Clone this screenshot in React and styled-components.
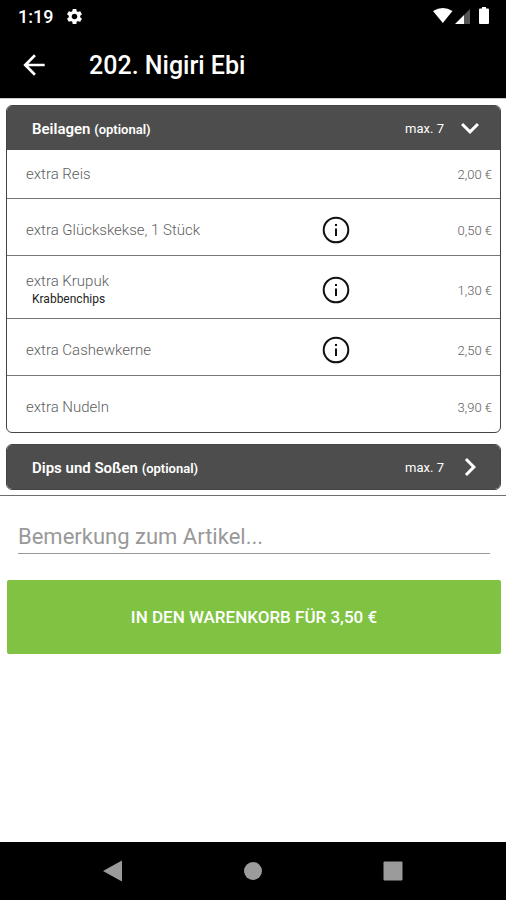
import React, { useState } from "react";
import styled, { createGlobalStyle } from "styled-components";

const GlobalStyle = createGlobalStyle`
  * { box-sizing: border-box; }
  body {
    margin: 0;
    background: #fff;
    font-family: Roboto, "Liberation Sans", sans-serif;
  }
  button, input { font-family: inherit; }
`;

const Screen = styled.div`
  min-height: 100vh;
  display: flex;
  flex-direction: column;
  background: #fff;
`;

const StatusBar = styled.div`
  display: flex;
  align-items: center;
  gap: 12px;
  height: 32px;
  padding: 0 16px 0 18px;
  background: #000;
  color: #fff;
  font-size: 18px;
  font-weight: 500;
`;

const StatusIcons = styled.div`
  display: flex;
  align-items: center;
  margin-left: auto;
`;

const AppBar = styled.header`
  display: flex;
  align-items: center;
  gap: 39px;
  height: 66px;
  padding: 0 18px;
  background: #000;
  color: #fff;
`;

const IconButton = styled.button`
  display: flex;
  padding: 0;
  border: 0;
  background: none;
  color: inherit;
  cursor: pointer;
`;

const Title = styled.h1`
  margin: 0;
  padding-top: 2px;
  font-size: 25px;
  line-height: 32px;
  font-weight: 500;
`;

const Groups = styled.main`
  display: flex;
  flex-direction: column;
  gap: 11px;
  padding: 6px 5px 5px 6px;
  border-top: 1px solid #ccc;
  border-bottom: 1px solid #6e6e6e;
`;

const Group = styled.section`
  border: 1px solid #444;
  border-radius: 6px;
  overflow: hidden;
`;

const GroupHeader = styled.button`
  display: flex;
  align-items: center;
  width: 100%;
  height: 44px;
  padding: 0 12px 0 25px;
  border: 0;
  background: #4d4d4d;
  color: #fff;
  font-size: 15px;
  font-weight: 700;
  text-align: left;
  cursor: pointer;
`;

const GroupName = styled.span`
  padding-top: 2px;
  font-weight: 600;
`;

const Optional = styled.span`
  font-size: 13px;
`;

const Limit = styled.span`
  margin-left: auto;
  padding-right: 8px;
  font-size: 13px;
  font-weight: 400;
`;

const ItemList = styled.ul`
  margin: 0;
  padding: 0;
  list-style: none;
`;

const heights = { short: 48, normal: 57, tall: 63 };

const Item = styled.li`
  display: grid;
  grid-template-columns: minmax(0, 1fr) 32px 140px;
  align-items: center;
  height: ${(p) => heights[p.$size]}px;
  padding: 0 8px 0 19px;
  color: #606060;

  & + & {
    padding-top: 6px;
    border-top: 1px solid #777;
  }
`;

const ItemName = styled.div`
  font-size: 15px;
  line-height: 18px;
  font-weight: 300;
`;

const ItemNote = styled.div`
  padding-left: 6px;
  color: #222;
  font-size: 12px;
  font-weight: 400;
`;

const InfoButton = styled(IconButton)`
  grid-column: 2;
  color: #111;
`;

const Price = styled.span`
  grid-column: 3;
  justify-self: end;
  font-size: 13px;
  font-weight: 300;
`;

const OrderForm = styled.form`
  display: flex;
  flex-direction: column;
  gap: 26px;
  padding: 24px 5px 0 7px;
`;

const NoteInput = styled.input`
  height: 34px;
  margin: 0 11px;
  padding: 0;
  border: 0;
  border-bottom: 1px solid #999;
  border-radius: 0;
  outline: 0;
  background: none;
  color: #333;
  font-size: 22px;

  &::placeholder { color: #999; opacity: 1; }
`;

const CartButton = styled.button`
  height: 74px;
  border: 0;
  border-radius: 2px;
  background: #80c342;
  color: #fff;
  font-size: 17px;
  font-weight: 500;
  cursor: pointer;
`;

const NavBar = styled.nav`
  display: flex;
  align-items: center;
  justify-content: space-around;
  height: 58px;
  margin-top: auto;
  padding: 0 43px;
  background: #000;
  color: #9b9b9b;
`;

const Icon = ({ d, size }) => (
  <svg width={size} height={size} viewBox="0 0 24 24" fill="currentColor" aria-hidden="true">
    <path d={d} />
  </svg>
);

const paths = {
  gear: "M19.14 12.94c.04-.3.06-.61.06-.94 0-.32-.02-.64-.07-.94l2.03-1.58c.18-.14.23-.41.12-.61l-1.92-3.32c-.12-.22-.37-.29-.59-.22l-2.39.96c-.5-.38-1.03-.7-1.62-.94l-.36-2.54c-.04-.24-.24-.41-.48-.41h-3.84c-.24 0-.43.17-.47.41l-.36 2.54c-.59.24-1.13.57-1.62.94l-2.39-.96c-.22-.08-.47 0-.59.22L2.74 8.87c-.12.21-.08.47.12.61l2.03 1.58c-.05.3-.09.63-.09.94s.02.64.07.94l-2.03 1.58c-.18.14-.23.41-.12.61l1.92 3.32c.12.22.37.29.59.22l2.39-.96c.5.38 1.03.7 1.62.94l.36 2.54c.05.24.24.41.48.41h3.84c.24 0 .44-.17.47-.41l.36-2.54c.59-.24 1.13-.56 1.62-.94l2.39.96c.22.08.47 0 .59-.22l1.92-3.32c.12-.22.07-.47-.12-.61l-2.01-1.58zM12 15.6c-1.98 0-3.6-1.62-3.6-3.6s1.62-3.6 3.6-3.6 3.6 1.62 3.6 3.6-1.62 3.6-3.6 3.6z",
  back: "M20 11H7.83l5.59-5.59L12 4l-8 8 8 8 1.41-1.41L7.83 13H20v-2z",
  down: "M16.59 8.59 12 13.17 7.41 8.59 6 10l6 6 6-6z",
  right: "M10 6 8.59 7.41 13.17 12l-4.58 4.59L10 18l6-6z",
};

const InfoIcon = () => (
  <svg width="32" height="32" viewBox="0 0 32 32" fill="none" aria-hidden="true">
    <circle cx="16" cy="16" r="12.3" stroke="currentColor" strokeWidth="2" />
    <path d="M15 10h2v2h-2zM15 14.5h2v7.5h-2z" fill="currentColor" />
  </svg>
);

const StatusGlyphs = () => (
  <svg width="58" height="20" viewBox="0 0 58 20" fill="#fff" aria-hidden="true">
    <path d="M1 5Q11 -1 20.5 5L10.8 17Z" />
    <path d="M23 18 32 9V18Z" />
    <path d="M32 9 38 3V18H32Z" fill="#555" />
    <path d="M50 1h4v1.500h2q1 0 1 1V17q0 1-1 1H48q-1 0-1-1V3.500q0-1 1-1h2Z" />
  </svg>
);

const groups = [
  {
    name: "Beilagen",
    open: true,
    items: [
      { name: "extra Reis", price: "2,00 €", size: "short" },
      { name: "extra Glückskekse, 1 Stück", price: "0,50 €", size: "normal", info: true },
      { name: "extra Krupuk", note: "Krabbenchips", price: "1,30 €", size: "tall", info: true },
      { name: "extra Cashewkerne", price: "2,50 €", size: "normal", info: true },
      { name: "extra Nudeln", price: "3,90 €", size: "normal" },
    ],
  },
  { name: "Dips und Soßen", open: false, items: [] },
];

function OptionGroup({ group }) {
  const [open, setOpen] = useState(group.open);
  return (
    <Group>
      <GroupHeader type="button" aria-expanded={open} onClick={() => setOpen(!open)}>
        <GroupName>
          {group.name} <Optional>(optional)</Optional>
        </GroupName>
        <Limit>max. 7</Limit>
        <Icon d={open ? paths.down : paths.right} size={36} />
      </GroupHeader>
      {open && group.items.length > 0 && (
        <ItemList>
          {group.items.map((item) => (
            <Item key={item.name} $size={item.size}>
              <ItemName>
                {item.name}
                {item.note && <ItemNote>{item.note}</ItemNote>}
              </ItemName>
              {item.info && (
                <InfoButton type="button" aria-label={`Info: ${item.name}`}>
                  <InfoIcon />
                </InfoButton>
              )}
              <Price>{item.price}</Price>
            </Item>
          ))}
        </ItemList>
      )}
    </Group>
  );
}

export default function App() {
  return (
    <Screen>
      <GlobalStyle />
      <StatusBar>
        <span>1:19</span>
        <Icon d={paths.gear} size={19} />
        <StatusIcons>
          <StatusGlyphs />
        </StatusIcons>
      </StatusBar>
      <AppBar>
        <IconButton type="button" aria-label="Zurück">
          <Icon d={paths.back} size={32} />
        </IconButton>
        <Title>202. Nigiri Ebi</Title>
      </AppBar>
      <Groups>
        {groups.map((group) => (
          <OptionGroup key={group.name} group={group} />
        ))}
      </Groups>
      <OrderForm onSubmit={(e) => e.preventDefault()}>
        <NoteInput
          type="text"
          aria-label="Bemerkung zum Artikel"
          placeholder="Bemerkung zum Artikel..."
        />
        <CartButton type="submit">IN DEN WARENKORB FÜR 3,50 €</CartButton>
      </OrderForm>
      <NavBar>
        <IconButton type="button" aria-label="Zurück">
          <svg width="20" height="22" viewBox="0 0 20 22" fill="currentColor" aria-hidden="true">
            <path d="M0 11 18 1Q19 .5 19 1.500V20.500Q19 21.500 18 21Z" />
          </svg>
        </IconButton>
        <IconButton type="button" aria-label="Startseite">
          <svg width="20" height="20" viewBox="0 0 20 20" fill="currentColor" aria-hidden="true">
            <circle cx="10" cy="10" r="9" />
          </svg>
        </IconButton>
        <IconButton type="button" aria-label="Übersicht">
          <svg width="20" height="20" viewBox="0 0 20 20" fill="currentColor" aria-hidden="true">
            <rect x="0.5" y="0.5" width="19" height="19" rx="1" />
          </svg>
        </IconButton>
      </NavBar>
    </Screen>
  );
}
